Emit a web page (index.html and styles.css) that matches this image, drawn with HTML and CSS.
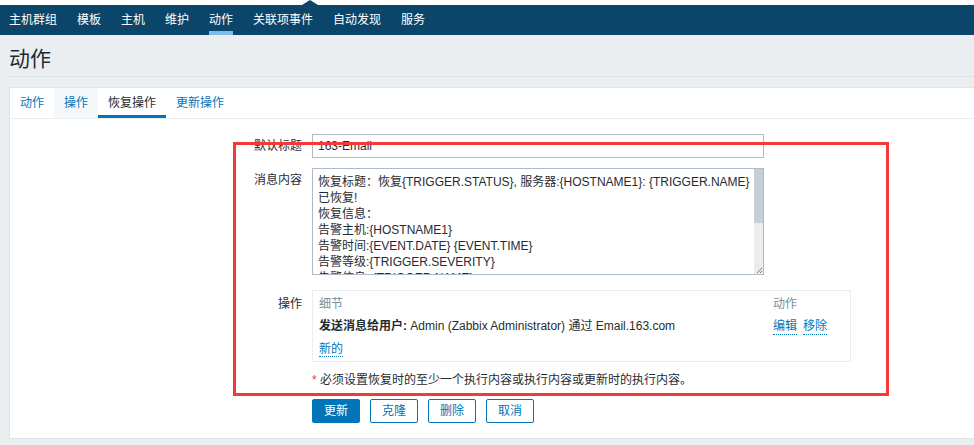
FILE: index.html
```html
<!DOCTYPE html>
<html lang="zh-CN">
<head>
<meta charset="utf-8">
<title>动作</title>
<link rel="stylesheet" href="styles.css">
</head>
<body>
<div class="topstrip"><span class="notch"></span></div>
<nav class="topnav">
  <a class="nav-item">主机群组</a>
  <a class="nav-item">模板</a>
  <a class="nav-item">主机</a>
  <a class="nav-item">维护</a>
  <a class="nav-item active">动作</a>
  <a class="nav-item">关联项事件</a>
  <a class="nav-item">自动发现</a>
  <a class="nav-item">服务</a>
</nav>
<header class="page-header">
  <h1 class="page-title">动作</h1>
</header>
<main class="card">
  <div class="tabs">
    <a class="tab">动作</a>
    <a class="tab hover">操作</a>
    <a class="tab active">恢复操作</a>
    <a class="tab">更新操作</a>
  </div>
  <div class="form">
    <div class="row row-subject">
      <label class="label">默认标题</label>
      <div class="field"><input class="input" type="text" value="163-Email"></div>
    </div>
    <div class="row row-message">
      <label class="label">消息内容</label>
      <div class="field ta-wrap"><textarea class="textarea">恢复标题：恢复{TRIGGER.STATUS}, 服务器:{HOSTNAME1}: {TRIGGER.NAME}已恢复!
恢复信息：
告警主机:{HOSTNAME1}
告警时间:{EVENT.DATE} {EVENT.TIME}
告警等级:{TRIGGER.SEVERITY}
告警信息: {TRIGGER.NAME}
告警项目:{TRIGGER.KEY1}
问题详情:{ITEM.NAME}:{ITEM.VALUE}
当前状态:{TRIGGER.STATUS}:{ITEM.VALUE1}
事件ID:{EVENT.ID}</textarea>
        <div class="scrollbar"><span class="thumb"></span></div>
        <div class="resizer"><svg width="9" height="9" viewBox="0 0 9 9"><path d="M8 3 L3 8 M8 6 L6 8" stroke="#7a7a7a" stroke-width="1" fill="none"/></svg></div>
      </div>
    </div>
    <div class="row row-ops">
      <label class="label">操作</label>
      <div class="field">
        <div class="ops-box">
          <div class="ops-row ops-head">
            <span>细节</span>
            <span>动作</span>
          </div>
          <div class="ops-row">
            <span><b class="strong">发送消息给用户:</b> Admin (Zabbix Administrator) 通过 Email.163.com</span>
            <span class="links"><a class="link">编辑</a><a class="link">移除</a></span>
          </div>
          <div class="ops-row">
            <span><a class="link">新的</a></span>
            <span></span>
          </div>
        </div>
      </div>
    </div>
    <div class="row row-note">
      <span class="label"></span>
      <div class="field note"><span class="req">*</span> 必须设置恢复时的至少一个执行内容或执行内容或更新时的执行内容。</div>
    </div>
    <div class="row row-buttons">
      <span class="label"></span>
      <div class="field buttons">
        <button class="btn primary">更新</button>
        <button class="btn">克隆</button>
        <button class="btn">删除</button>
        <button class="btn">取消</button>
      </div>
    </div>
  </div>
</main>
<div class="annotation"></div>
</body>
</html>
```
FILE: styles.css
```css
* { box-sizing: border-box; }
html, body { margin: 0; padding: 0; }
body {
  position: relative;
  background: #ebeef0;
  font-family: "Liberation Sans", Arial, "Noto Sans CJK SC", sans-serif;
  font-size: 12px;
  line-height: 16px;
  color: #1f2c33;
  overflow: hidden;
  width: 974px;
  height: 445px;
}
a { text-decoration: none; cursor: pointer; }

.topstrip {
  height: 5px;
  background: #ffffff;
  position: relative;
}
.notch {
  position: absolute;
  left: 302px;
  top: 0;
  width: 0;
  height: 0;
  border-left: 8px solid transparent;
  border-right: 8px solid transparent;
  border-bottom: 5px solid #0b466a;
}

.topnav {
  height: 30px;
  background: #0b466a;
  display: flex;
  gap: 20px;
  padding-left: 9px;
}
.nav-item {
  color: #ffffff;
  display: flex;
  align-items: center;
  height: 30px;
  border-bottom: 4px solid transparent;
  padding-top: 4px;
}
.nav-item.active { border-bottom-color: #7bbce9; }

.page-header {
  margin-left: 9px;
  margin-right: -20px;
  padding-top: 12px;
  padding-bottom: 5px;
  border-bottom: 1px solid #dde2e5;
}
.page-title {
  margin: 0;
  font-size: 21px;
  line-height: 24px;
  font-weight: normal;
  color: #1f2c33;
}

.card {
  margin: 10px -20px 0 9px;
  background: #ffffff;
  border: 1px solid #dfe4e7;
}

.tabs {
  display: flex;
  height: 31px;
  border-bottom: 1px solid #ebeef0;
}
.tab {
  display: flex;
  align-items: center;
  padding: 0 10px;
  height: 30px;
  color: #0275b8;
  border-bottom: 3px solid transparent;
  padding-top: 2px;
}
.tab.hover { background: #f4f8fb; }
.tab.active { color: #1f2c33; border-bottom-color: #0275b8; }

.form {
  padding: 15px 0 15px 0;
  display: flex;
  flex-direction: column;
}
.row {
  display: grid;
  grid-template-columns: 292px 452px;
  column-gap: 10px;
}
.label {
  text-align: right;
}
.row-subject { margin-bottom: 10px; }
.row-subject .label { padding-top: 4px; }
.row-message { margin-bottom: 15px; }
.row-message .label { padding-top: 4px; }
.row-ops .label { padding-top: 6px; }
.row-ops { grid-template-columns: 292px 539px; }
.row-note { margin-top: 10px; grid-template-columns: 292px 600px; }
.row-buttons { margin-top: 11px; }

.input {
  display: block;
  width: 452px;
  height: 24px;
  border: 1px solid #acbbc7;
  padding: 0 5px;
  font: inherit;
  color: #1f2c33;
  background: #ffffff;
  outline: none;
}
.ta-wrap { position: relative; }
.textarea {
  display: block;
  width: 452px;
  height: 107px;
  border: 1px solid #acbbc7;
  padding: 5px 10px 5px 5px;
  font: inherit;
  line-height: 16px;
  color: #1f2c33;
  resize: none;
  overflow: hidden;
  outline: none;
}
.scrollbar {
  position: absolute;
  top: 1px;
  right: 1px;
  bottom: 10px;
  width: 9px;
  background: #ececec;
}
.thumb {
  display: block;
  height: 54px;
  background: #c5cfd6;
}
.resizer {
  position: absolute;
  right: 1px;
  bottom: 1px;
  width: 9px;
  height: 9px;
  background: #ececec;
  display: flex;
}

.ops-box {
  border: 1px solid #ebeef0;
  padding: 2px 6px 1px;
}
.ops-row {
  display: grid;
  grid-template-columns: 454px 1fr;
  padding: 3px 0;
}
.ops-head { color: #768d99; }
.strong { font-weight: bold; }
.links { display: flex; gap: 6px; }
.link {
  color: #0275b8;
  border-bottom: 1px dotted #0275b8;
}

.note { white-space: nowrap; }
.req { color: #e33734; }

.buttons { display: flex; gap: 10px; }
.btn {
  width: 48px;
  height: 24px;
  border: 1px solid #0275b8;
  background: #ffffff;
  color: #0275b8;
  font: inherit;
  padding: 0;
  border-radius: 2px;
}
.btn.primary {
  background: #0275b8;
  color: #ffffff;
}

.annotation {
  position: absolute;
  left: 233px;
  top: 142px;
  width: 656px;
  height: 254px;
  border: 3px solid #f23a3a;
  pointer-events: none;
}
```
